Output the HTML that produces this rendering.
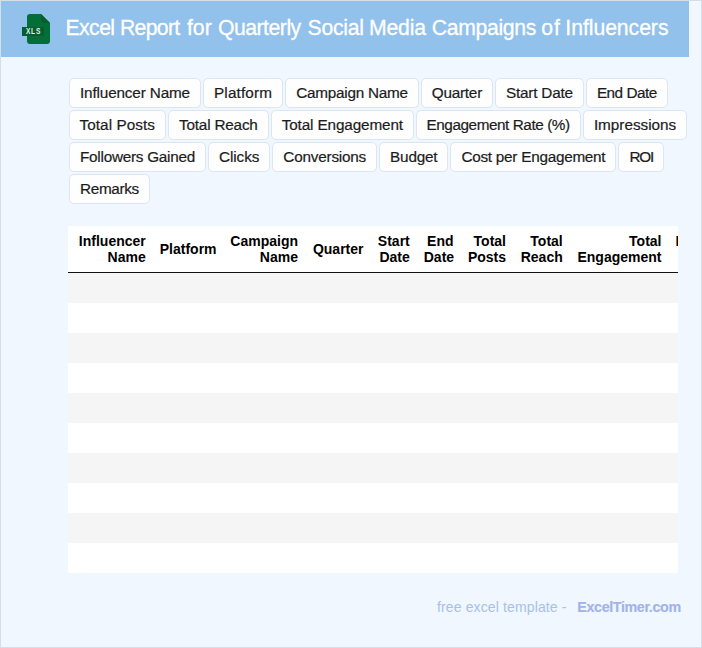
<!DOCTYPE html>
<html lang="en">
<head>
<meta charset="utf-8">
<title>Excel Report for Quarterly Social Media Campaigns of Influencers</title>
<style>
html,body{margin:0;padding:0;}
body{width:702px;height:648px;overflow:hidden;background:#f0f7ff;font-family:"Liberation Sans",sans-serif;position:relative;}
.frame{position:absolute;left:0;top:0;width:700px;height:646px;border:1px solid #d5dfe9;background:#f0f7ff;overflow:hidden;}
.hdr{position:absolute;left:0;top:0;width:688px;height:56px;background:#92c1ec;}
.hdr h1{position:absolute;left:66px;top:15px;margin:0;font-weight:400;font-size:21.2px;line-height:24px;color:#fff;white-space:nowrap;-webkit-text-stroke:0.3px #fff;}
.ico{position:absolute;left:21px;top:13px;}
.tags{position:absolute;left:68px;top:77px;width:640px;}
.row{display:flex;gap:2px;height:30px;margin-bottom:2px;white-space:nowrap;}
.tag{flex:none;display:block;box-sizing:border-box;height:30px;padding:0;border:1px solid #dbe6f2;border-radius:5px;background:#fefefe;color:#1c1c1c;font-size:15.3px;line-height:28px;-webkit-text-stroke:0.2px #1c1c1c;text-align:center;white-space:nowrap;}
.tblwrap{position:absolute;left:67px;top:225px;width:610px;height:347px;overflow:hidden;background:#fff;}
table{border-collapse:collapse;table-layout:fixed;width:874.5px;font-size:14px;}
th{height:46px;padding:0 7px;font-weight:700;text-align:right;vertical-align:middle;line-height:16px;color:#000;border-bottom:1px solid #111;box-sizing:border-box;}
td{height:30px;padding:0;}
tbody tr:nth-child(odd) td{background:#f5f5f5;}
.foot{position:absolute;left:436px;top:597px;font-size:14px;line-height:18px;color:#a9c0e8;white-space:nowrap;letter-spacing:0.13px;}
.foot b{position:absolute;left:140.3px;top:0.4px;color:#a3b3ea;font-weight:700;font-size:14.3px;letter-spacing:-0.37px;-webkit-text-stroke:0.15px #a3b3ea;}
/*TW*/
.hdr h1 span{position:absolute;top:0;}
.w0{left:-1.48px;letter-spacing:-0.574px;}
.w1{left:52.98px;letter-spacing:-0.678px;}
.w2{left:119.97px;letter-spacing:0.018px;}
.w3{left:150.89px;letter-spacing:-0.474px;}
.w4{left:240.57px;letter-spacing:-0.251px;}
.w5{left:301.98px;letter-spacing:-0.175px;}
.w6{left:364.74px;letter-spacing:-0.332px;}
.w7{left:474.32px;letter-spacing:0.974px;}
.w8{left:498.37px;letter-spacing:-0.053px;}
/*TWE*/
</style>
</head>
<body>
<div class="frame">
  <div class="hdr">
    <svg class="ico" width="30" height="32" viewBox="0 0 30 32">
      <path d="M8 0h11l9 9v18a3 3 0 0 1-3 3H8a3 3 0 0 1-3-3V3a3 3 0 0 1 3-3z" fill="#036e38"/>
      <path d="M19 0l9 9h-7a2 2 0 0 1-2-2z" fill="#045f2f"/>
      <rect x="0" y="13" width="22" height="9" fill="#045f2f"/>
      <g transform="translate(3.9 20) scale(0.74 1)"><text x="0" y="0" font-family="Liberation Sans, sans-serif" font-size="8.9" font-weight="700" fill="#eaf3ec" letter-spacing="1.1">XLS</text></g>
    </svg>
    <h1><span class="w0">Excel</span> <span class="w1">Report</span> <span class="w2">for</span> <span class="w3">Quarterly</span> <span class="w4">Social</span> <span class="w5">Media</span> <span class="w6">Campaigns</span> <span class="w7">of</span> <span class="w8">Influencers</span></h1>
  </div>
  <div class="tags">
    <div class="row"><span class="tag" style="width:131.97px;letter-spacing:-0.151px">Influencer Name</span><span class="tag" style="width:80.19px;letter-spacing:0.154px">Platform</span><span class="tag" style="width:133.7px;letter-spacing:-0.237px">Campaign Name</span><span class="tag" style="width:72.16px;letter-spacing:-0.243px">Quarter</span><span class="tag" style="width:88.92px;letter-spacing:-0.195px">Start Date</span><span class="tag" style="width:81.86px;letter-spacing:-0.490px">End Date</span></div>
    <div class="row"><span class="tag" style="width:96.53px;letter-spacing:0.064px">Total Posts</span><span class="tag" style="width:101.69px;letter-spacing:-0.190px">Total Reach</span><span class="tag" style="width:142.3px;letter-spacing:-0.126px">Total Engagement</span><span class="tag" style="width:165.13px;letter-spacing:-0.433px">Engagement Rate (%)</span><span class="tag" style="width:104.77px;letter-spacing:-0.018px">Impressions</span></div>
    <div class="row"><span class="tag" style="width:137.05px;letter-spacing:-0.249px">Followers Gained</span><span class="tag" style="width:62.27px;letter-spacing:-0.089px">Clicks</span><span class="tag" style="width:104.78px;letter-spacing:-0.205px">Conversions</span><span class="tag" style="width:69.36px;letter-spacing:-0.188px">Budget</span><span class="tag" style="width:165.94px;letter-spacing:-0.257px">Cost per Engagement</span><span class="tag" style="width:45.66px;letter-spacing:-1.182px">ROI</span></div>
    <div class="row"><span class="tag" style="width:80.95px;letter-spacing:-0.321px">Remarks</span></div>
  </div>
  <div class="tblwrap">
    <table>
      <thead><tr>
        <th style="width:84.75px">Influencer<br>Name</th>
        <th style="width:70px">Platform</th>
        <th style="width:82.25px">Campaign<br>Name</th>
        <th style="width:65.5px">Quarter</th>
        <th style="width:46.25px">Start<br>Date</th>
        <th style="width:43.75px">End<br>Date</th>
        <th style="width:52.5px">Total<br>Posts</th>
        <th style="width:56.75px">Total<br>Reach</th>
        <th style="width:98.75px">Total<br>Engagement</th>
        <th style="width:98px">Engagement<br>Rate (%)</th>
        <th style="width:97px">Impressions</th>
        <th style="width:80px">Followers<br>Gained</th>
      </tr></thead>
      <tbody>
        <tr><td colspan="12"></td></tr><tr><td colspan="12"></td></tr><tr><td colspan="12"></td></tr><tr><td colspan="12"></td></tr><tr><td colspan="12"></td></tr>
        <tr><td colspan="12"></td></tr><tr><td colspan="12"></td></tr><tr><td colspan="12"></td></tr><tr><td colspan="12"></td></tr><tr><td colspan="12"></td></tr>
      </tbody>
    </table>
  </div>
  <div class="foot">free excel template - <b>ExcelTimer.com</b></div>
</div>
</body>
</html>
